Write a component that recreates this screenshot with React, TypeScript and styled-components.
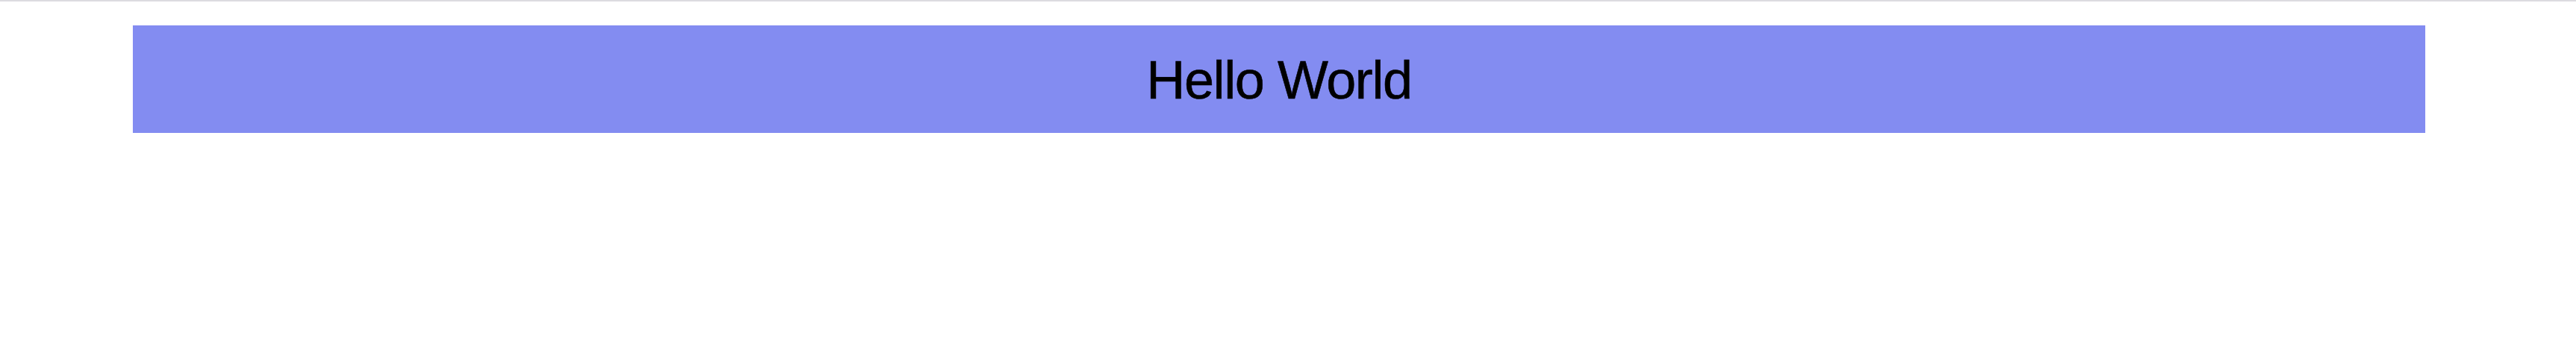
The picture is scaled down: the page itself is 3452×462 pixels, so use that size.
import React from "react";
import styled, { createGlobalStyle } from "styled-components";

const Global = createGlobalStyle`
  html, body { margin: 0; padding: 0; background: #ffffff; }
  body { font-family: "Liberation Sans", Arial, Helvetica, sans-serif; }
`;

const Page = styled.div`
  border-top: 2px solid #dcdbe0;
  padding: 32px 202px 0 178px;
  height: 460px;
  box-sizing: border-box;
`;

const Banner = styled.header`
  height: 144px;
  background: #838cf1;
  display: flex;
  align-items: center;
  justify-content: center;
`;

const Title = styled.h1`
  margin: 0;
  padding-top: 1px;
  font-family: "Liberation Sans", Arial, Helvetica, sans-serif;
  font-weight: 400;
  font-size: 72px;
  letter-spacing: -1.4px;
  line-height: 1;
  color: #000;
  -webkit-text-stroke: 0.6px #000;
`;

export default function App() {
  return (
    <>
      <Global />
      <Page>
        <Banner>
          <Title>Hello World</Title>
        </Banner>
      </Page>
    </>
  );
}
